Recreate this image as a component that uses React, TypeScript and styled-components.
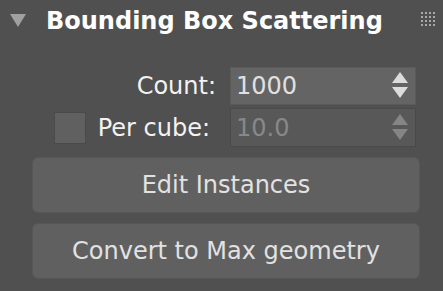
import React from "react";
import styled, { createGlobalStyle } from "styled-components";

const Global = createGlobalStyle`
  html, body { margin: 0; padding: 0; background: #505050; }
  body { font-family: "DejaVu Sans", sans-serif; }
`;

const Panel = styled.div`
  width: 443px;
  height: 291px;
  background: #505050;
  box-sizing: border-box;
  display: flex;
  flex-direction: column;
`;

const Header = styled.div`
  height: 44px;
  display: flex;
  align-items: center;
  padding: 0 8px 0 10px;
  box-sizing: border-box;
`;

const Chevron = styled.svg`
  width: 16px;
  height: 13px;
  flex: none;
  margin-top: -4px;
`;

const Title = styled.div`
  margin-left: 20px;
  font-family: "DejaVu Sans", sans-serif;
  font-weight: bold;
  font-size: 24px;
  color: #ffffff;
  flex: 1;
  margin-top: -3px;
  white-space: nowrap;
`;

const Grip = styled.div`
  display: grid;
  grid-template-columns: repeat(4, 2px);
  grid-auto-rows: 2px;
  gap: 2px;
  margin-top: -6px;
  span {
    background: #a8a8a8;
  }
`;

const Form = styled.div`
  display: grid;
  grid-template-columns: 1fr 186px;
  row-gap: 3px;
  padding: 23px 27px 0 0;
`;

const LabelCell = styled.div<{ $pr: number }>`
  display: flex;
  align-items: center;
  justify-content: flex-end;
  padding-right: ${(p) => p.$pr}px;
`;

const Label = styled.span`
  font-size: 24px;
  color: #f2f2f2;
  white-space: nowrap;
`;

const Check = styled.div`
  width: 30px;
  height: 30px;
  background: #606060;
  border: 1px solid #4a4a4a;
  margin-right: 12px;
`;

const Spinner = styled.div<{ $disabled?: boolean; $h: number }>`
  height: ${(p) => p.$h}px;
  box-sizing: border-box;
  background: ${(p) => (p.$disabled ? "#585858" : "#646464")};
  border: 1px solid ${(p) => (p.$disabled ? "#4a4a4a" : "#5a5a5a")};
  display: flex;
  align-items: center;
  padding: 0 7px 0 5px;
`;

const Value = styled.span<{ $disabled?: boolean }>`
  flex: 1;
  font-size: 24px;
  color: ${(p) => (p.$disabled ? "#888888" : "#e0e0e0")};
`;

const Arrows = styled.svg`
  width: 16px;
  height: 28px;
  flex: none;
`;

const Buttons = styled.div`
  display: flex;
  flex-direction: column;
  gap: 10px;
  padding: 10px 23px 0 32px;
`;

const Button = styled.div`
  height: 56px;
  box-sizing: border-box;
  border-radius: 6px;
  background: #606060;
  border: 1px solid #565656;
  display: flex;
  align-items: center;
  justify-content: center;
  font-size: 24px;
  color: #e2e2e2;
  white-space: nowrap;
`;

const ArrowIcon = ({ color }: { color: string }) => (
  <Arrows viewBox="0 0 16 28">
    <polygon points="8,0 16,11 0,11" fill={color} />
    <polygon points="0,15 16,15 8,26" fill={color} />
  </Arrows>
);

export default function App() {
  return (
    <>
      <Global />
      <Panel>
        <Header>
          <Chevron viewBox="0 0 16 13">
            <polygon points="0,0 16,0 8,13" fill="#a0a0a0" />
          </Chevron>
          <Title>Bounding Box Scattering</Title>
          <Grip>
            {Array.from({ length: 16 }).map((_, i) => (
              <span key={i} />
            ))}
          </Grip>
        </Header>
        <Form>
          <LabelCell $pr={14}>
            <Label>Count:</Label>
          </LabelCell>
          <Spinner $h={38}>
            <Value>1000</Value>
            <ArrowIcon color="#dcdcdc" />
          </Spinner>
          <LabelCell $pr={20}>
            <Check />
            <Label>Per cube:</Label>
          </LabelCell>
          <Spinner $h={39} $disabled>
            <Value $disabled>10.0</Value>
            <ArrowIcon color="#858585" />
          </Spinner>
        </Form>
        <Buttons>
          <Button>Edit Instances</Button>
          <Button>Convert to Max geometry</Button>
        </Buttons>
      </Panel>
    </>
  );
}
